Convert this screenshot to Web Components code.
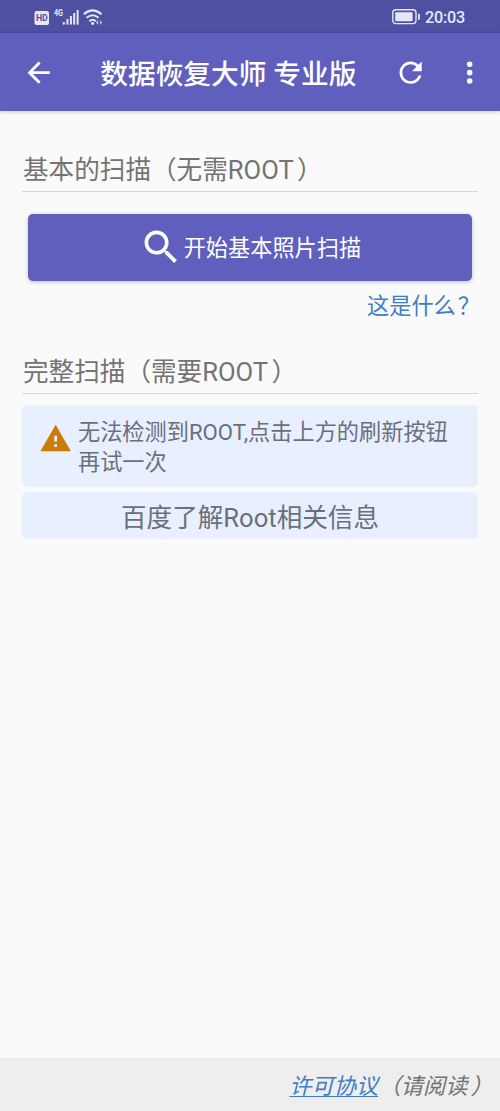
<!DOCTYPE html>
<html lang="zh-CN">
<head>
<meta charset="utf-8">
<title>数据恢复大师 专业版</title>
<style>
html,body{margin:0;height:100%}
body{background:#fafafa;font-family:Roboto,"Noto Sans CJK SC",sans-serif;overflow:hidden}
</style>
</head>
<body>
<recovery-app></recovery-app>
<script>
const define = (name, html) => customElements.define(name, class extends HTMLElement {
  constructor() {
    super();
    this.attachShadow({mode: 'open'}).innerHTML = html;
  }
});

define('status-bar', `
<style>
:host{display:flex;align-items:center;justify-content:space-between;box-sizing:border-box;height:33px;padding:0 35px 0 34px;background:#4f50a2;color:#e6e6f6}
div{display:flex;align-items:center}
svg{display:block}
.time{font-size:16.2px;font-weight:500;line-height:20px;margin-left:4px;padding-top:2px;letter-spacing:-.2px}
</style>
<div><svg width="70" height="20" viewBox="0 0 70 20" fill="currentColor">
<rect x="0.5" y="4" width="14.5" height="14" rx="2"/>
<text x="1.9" y="14.4" font-size="9.5" font-weight="700" textLength="11.8" lengthAdjust="spacingAndGlyphs" fill="#4f50a2">HD</text>
<text x="20" y="9.2" font-size="8.5" font-weight="700" textLength="9" lengthAdjust="spacingAndGlyphs">4G</text>
<rect x="28.8" y="15" width="2" height="2.6"/><rect x="32.4" y="12" width="2" height="5.6"/><rect x="35.9" y="9" width="2" height="8.6"/><rect x="39.2" y="6" width="2" height="11.6"/><rect x="42.6" y="3" width="2" height="14.6"/>
<g fill="none" stroke="currentColor" stroke-width="2"><path d="M49.8 7.2Q58.6-.5 67.5 7.2"/><path d="M52.6 10.8Q58.6 5.7 64.6 10.8"/><path d="M55.3 14.2Q58.6 11.4 61.9 14.2"/></g>
<circle cx="58.6" cy="16.3" r="1.6"/><path d="M64.2 13v5l-2.3-2.5zM66 13v5l2.1-2.5z" opacity=".75"/>
</svg></div>
<div><svg width="29" height="18" viewBox="0 0 29 18">
<rect x=".8" y="1.8" width="23.2" height="13.8" rx="3" fill="none" stroke="currentColor" stroke-width="1.4"/>
<rect x="3.2" y="4.2" width="17.4" height="9" rx="1" fill="currentColor"/><rect x="26" y="5.5" width="1.8" height="6.5" rx=".9" fill="currentColor"/>
</svg><span class="time">20:03</span></div>`);

define('tool-bar', `
<style>
:host{display:flex;align-items:center;box-sizing:border-box;height:78px;background:#605fbe;color:#fff;box-shadow:0 1px 4px rgba(0,0,0,.2);padding:1px 14px 0 22px}
h1{flex:1;margin:0 0 0 45px;padding-top:5px;font-size:27.7px;font-weight:500;line-height:40px;white-space:nowrap}
svg{display:block;fill:currentColor}
</style>
<svg width="33.3" height="33.3" viewBox="0 0 24 24"><path d="M20 11H7.83l5.59-5.59L12 4l-8 8 8 8 1.41-1.41L7.83 13H20v-2z"/></svg>
<h1><slot></slot></h1>
<svg width="33.3" height="33.3" viewBox="0 0 24 24"><path d="M17.65 6.35C16.2 4.9 14.21 4 12 4c-4.42 0-7.99 3.58-7.99 8s3.57 8 7.99 8c3.73 0 6.84-2.55 7.73-6h-2.08c-.82 2.33-3.04 4-5.65 4-3.31 0-6-2.69-6-6s2.69-6 6-6c1.66 0 3.14.69 4.22 1.78L13 11h7V4l-2.35 2.35z"/></svg>
<svg style="margin-left:25px" width="33.3" height="33.3" viewBox="0 0 24 24"><circle cx="12" cy="6" r="2"/><circle cx="12" cy="12" r="2"/><circle cx="12" cy="18" r="2"/></svg>`);

define('section-title', `
<style>
:host{display:flex;align-items:flex-end;box-sizing:border-box;height:41px;padding:0 0 3px 1px;border-bottom:1px solid #d6d6d6;color:#737373;font-size:25.6px;line-height:36px;white-space:nowrap}
</style><span><slot></slot></span>`);

/* Closing full-width punctuation with an adjustable gap before it. */
define('closing-mark', `
<style>:host{display:inline;margin-left:-3px}</style><slot></slot>`);

define('scan-button', `
<style>
:host{display:block;margin:22px 6px 0 5.5px}
button{all:unset;box-sizing:border-box;display:flex;align-items:center;justify-content:center;width:100%;height:67px;border-radius:5px;background:#605fbe;color:#fff;font-size:22.2px;line-height:32px;box-shadow:0 1px 4px rgba(0,0,0,.24);padding:1px 0 0 1px}
svg{display:block;fill:currentColor;margin:0 0 2px}
</style>
<button><svg width="44.4" height="44.4" viewBox="0 0 24 24"><path d="M15.5 14h-.79l-.28-.27C15.41 12.59 16 11.11 16 9.5 16 5.91 13.09 3 9.5 3S3 5.91 3 9.5 5.91 16 9.5 16c1.61 0 3.09-.59 4.23-1.57l.27.28v.79l5 4.99L20.49 19l-4.99-5zm-6 0C7.01 14 5 11.99 5 9.5S7.01 5 9.5 5 14 7.01 14 9.5 11.99 14 9.5 14z"/></svg><span><slot></slot></span></button>`);

define('help-link', `
<style>
:host{display:flex;justify-content:flex-end;height:68px;padding:9px 0 0;box-sizing:border-box;font-size:22.2px;line-height:32px;color:#3f7dc5;white-space:nowrap}
</style><span><slot></slot></span>`);

define('info-card', `
<style>
:host{display:flex;box-sizing:border-box;height:82px;margin-top:11px;padding:12px 16px;border-radius:5px;background:#e8efff;color:#6b6f7a;font-size:22.2px;line-height:30px;white-space:nowrap}
svg{display:block;margin:4.5px 6px 0 .7px;flex:none}
</style>
<svg width="33.3" height="33.3" viewBox="0 0 24 24" fill="#cb7c05"><path d="M1 21h22L12 2 1 21zm12-3h-2v-2h2v2zm0-4h-2v-4h2v4z"/></svg><div><slot></slot></div>`);

define('search-card', `
<style>
:host{display:flex;align-items:center;justify-content:center;box-sizing:border-box;height:47px;margin-top:5px;padding-top:4px;border-radius:5px;background:#e8efff;color:#6b6f7a;font-size:25.6px;line-height:36px}
</style><span><slot></slot></span>`);

define('license-footer', `
<style>
:host{display:flex;align-items:center;justify-content:flex-end;height:53px;padding:2px 0 0;box-sizing:border-box;background:#eee;color:#737373;font-size:22.2px;line-height:32px;font-style:italic;white-space:nowrap}
a{color:#3f7dc5;text-decoration:underline;text-decoration-thickness:1px;text-underline-offset:2px}
span{margin:0 7px 0 .5px}
</style><a><slot name="link"></slot></a><span><slot></slot></span>`);

define('recovery-app', `
<style>
:host{display:flex;flex-direction:column;height:1111px}
main{flex:1;padding:40px 22px 0}
.full{margin-top:4px}
help-link closing-mark{margin:0 -2px 0 -3.5px}
license-footer closing-mark{margin-left:-2px}
</style>
<status-bar></status-bar>
<tool-bar>数据恢复大师 专业版</tool-bar>
<main>
<section-title>基本的扫描（无需ROOT<closing-mark>）</closing-mark></section-title>
<scan-button>开始基本照片扫描</scan-button>
<help-link>这是什么<closing-mark>？</closing-mark></help-link>
<section-title class="full">完整扫描（需要ROOT<closing-mark>）</closing-mark></section-title>
<info-card>无法检测到ROOT,点击上方的刷新按钮<br>再试一次</info-card>
<search-card>百度了解Root相关信息</search-card>
</main>
<license-footer><span slot="link">许可协议</span>（请阅读<closing-mark>）</closing-mark></license-footer>`);
</script>
</body>
</html>
